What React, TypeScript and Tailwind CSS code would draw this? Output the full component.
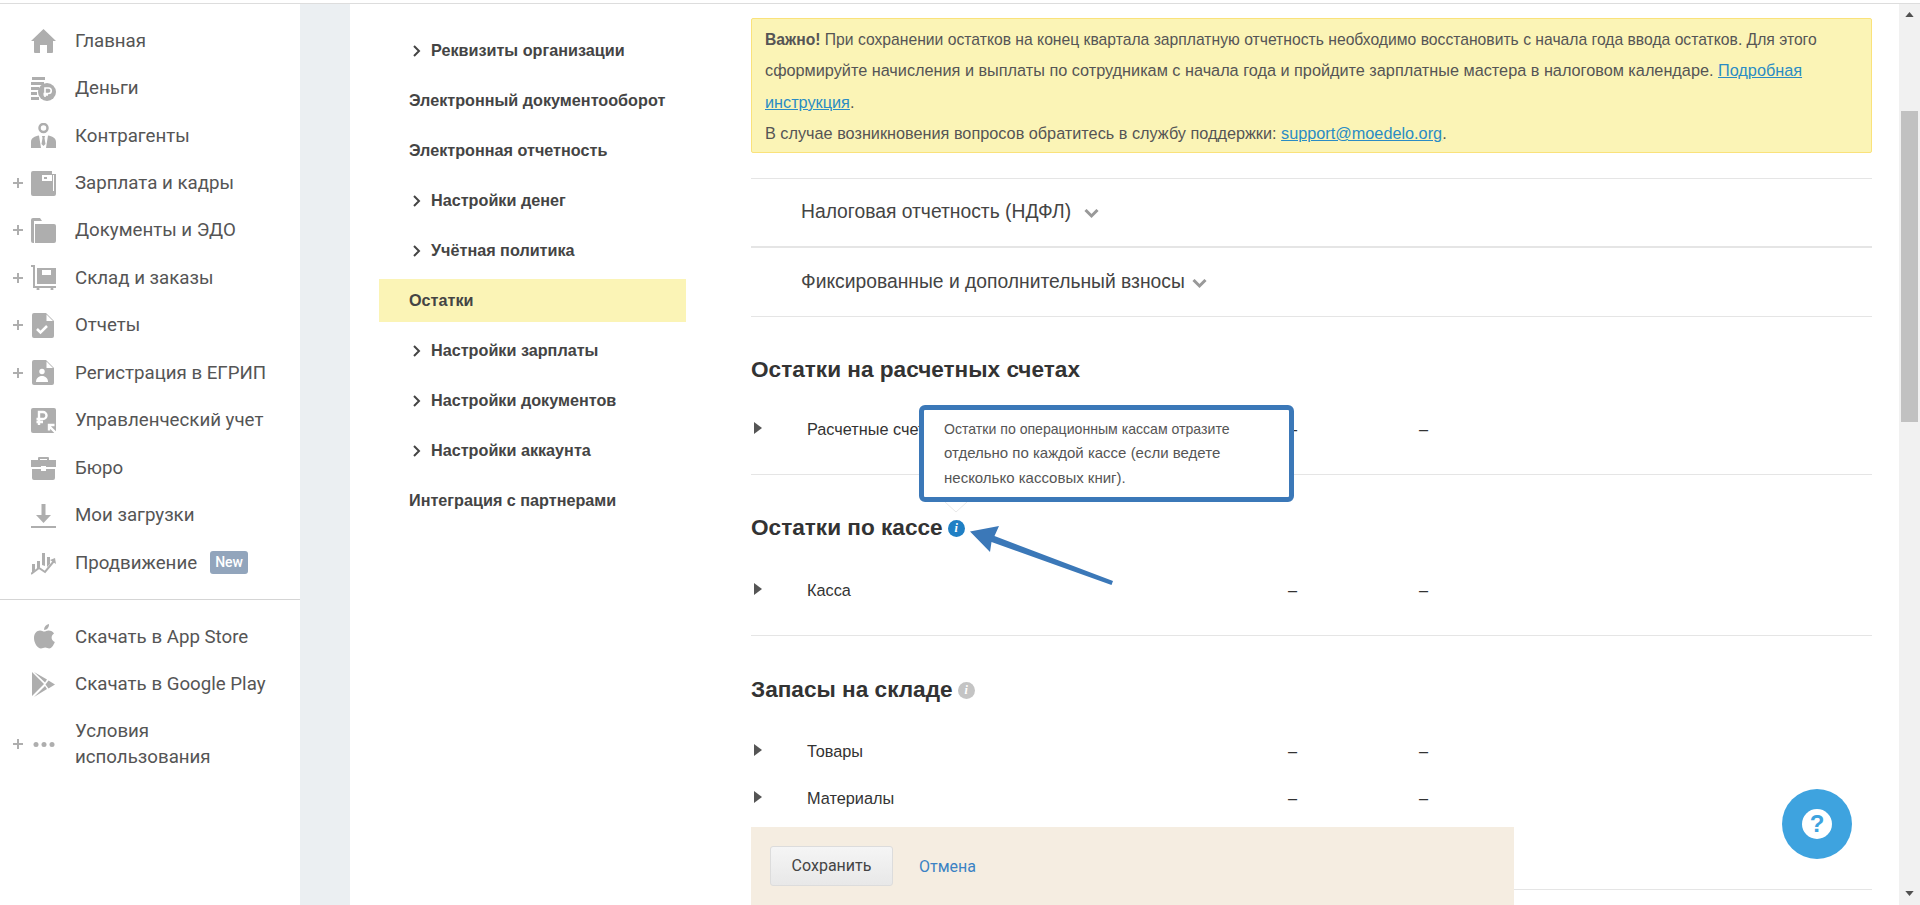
import { ReactNode } from "react";

const ICO = "w-[25px] h-[25px] text-[#aeaeae]";

const Svg = ({ children }: { children: ReactNode }) => (
  <svg viewBox="0 0 25 25" className={ICO} fill="currentColor">{children}</svg>
);

const icons: Record<string, ReactNode> = {
  home: <Svg><path d="M12.500 1 25 13h-3v11a1 1 0 0 1-1 1h-5v-8H9v8H4a1 1 0 0 1-1-1V13H0z" /></Svg>,
  money: (
    <Svg>
      <path d="M1 1h13v3H1zM0 6h13v3H0zM0 11h8v3H0zM0 16h6v3H0zM0 21h8v3H0z" />
      <circle cx="16" cy="16" r="9" />
      <path d="M14 21v-9h3.500a2.700 2.700 0 0 1 0 5.500H12.500M12.500 19H17" fill="none" stroke="#fff" strokeWidth="1.600" />
    </Svg>
  ),
  person: (
    <Svg>
      <circle cx="12.500" cy="5" r="4" fill="none" stroke="currentColor" strokeWidth="2.500" />
      <path d="M0 25v-6c0-4 4-6 8-6.500l2 12.500zM25 25v-6c0-4-4-6-8-6.500L15 25zM11 13h3l-.5 2 1 6-2 2-2-2 1-6z" />
    </Svg>
  ),
  wallet: (
    <Svg>
      <path d="M2 0h19v3h4v20a2 2 0 0 1-2 2H2a2 2 0 0 1-2-2V2a2 2 0 0 1 2-2z" />
      <path d="M11 4h10v6H11z" fill="#fff" />
      <rect x="13" y="6" width="3" height="2" />
      <path d="M22 4h1v16h-1z" fill="#fff" />
    </Svg>
  ),
  folder: (
    <Svg>
      <path d="M0 2a2 2 0 0 1 2-2h7l2 3H3v22H2a2 2 0 0 1-2-2z" />
      <path d="M4 6h19a2 2 0 0 1 2 2v15a2 2 0 0 1-2 2H4z" />
    </Svg>
  ),
  cart: (
    <Svg>
      <path d="M0 0h4v21h21v2H2V2H0z" />
      <path d="M6 3h19v16H6z" />
      <path d="M11 5h9v5h-9z" fill="#fff" />
      <circle cx="7" cy="24" r="1.500" /><circle cx="21" cy="24" r="1.500" />
    </Svg>
  ),
  report: (
    <Svg>
      <path d="M3 0h12l8 8v15a2 2 0 0 1-2 2H3a2 2 0 0 1-2-2V2a2 2 0 0 1 2-2z" />
      <path d="M15.500 1.500V8H22z" fill="#fff" />
      <path d="m6 16 3.500 3.500L16 13" fill="none" stroke="#fff" strokeWidth="2.500" />
    </Svg>
  ),
  reg: (
    <Svg>
      <path d="M3 0h12l8 8v15a2 2 0 0 1-2 2H3a2 2 0 0 1-2-2V2a2 2 0 0 1 2-2z" />
      <path d="M15.500 1.500V8H22z" fill="#fff" />
      <circle cx="11" cy="11.500" r="2.700" fill="#fff" />
      <path d="M5 22c0-3.500 2.500-6 6-6s6 2.500 6 6z" fill="#fff" />
    </Svg>
  ),
  mgmt: (
    <Svg>
      <path d="M2 0h21a2 2 0 0 1 2 2v23H2a2 2 0 0 1-2-2V2a2 2 0 0 1 2-2z" />
      <path d="M8 17V4h4a3.500 3.500 0 0 1 0 7H5.500M5.500 14H12" fill="none" stroke="#fff" strokeWidth="2.400" />
      <path d="M25 25 18 18m0 4.500v-5.500h5.500" fill="none" stroke="#fff" strokeWidth="2.400" />
    </Svg>
  ),
  case: (
    <Svg>
      <path d="M8 2h9a1 1 0 0 1 1 1v2h-2V4H9v1H7V3a1 1 0 0 1 1-1z" />
      <path d="M0 5h25v7H15v-1h-5v1H0zM1 14h9v2h5v-2h9v9a2 2 0 0 1-2 2H3a2 2 0 0 1-2-2z" />
    </Svg>
  ),
  download: <Svg><path d="M10.500 1h4v11H20l-7.500 8L5 12h5.500zM0 23h25v2H0z" /></Svg>,
  promo: (
    <Svg>
      <path d="M1 14h3v6l-3 3zM6 11h3v6l-3 3zM11 3h3v13l-3-1zM16 7h3v7l-3 3z" />
      <path d="m0 24 8-6 6 4 9-11" fill="none" stroke="currentColor" strokeWidth="2" />
      <path d="m25 14-1-6-5 2z" />
    </Svg>
  ),
  apple: (
    <Svg>
      <path d="M17.500 6.500c2.500 0 4.500 1.200 5.500 3-3.500 2-3 7 .8 8.500-1.200 3-3.300 6.500-5.600 6.500-1.500 0-2.300-1-4-1s-2.700 1-4.200 1C6.500 24.500 3 19 3 14c0-4.800 3-7.500 6-7.500 1.800 0 3 1.100 4.200 1.100 1.100 0 2.500-1.100 4.300-1.100z" />
      <path d="M13 6c0-3 2-5.500 5-6 .3 3-2 6-5 6z" />
    </Svg>
  ),
  play: (
    <Svg>
      <path d="M1 0 13 12 1 24zM3 0l13 7.500-2 3zM3 25l13-8-2-3zM17.500 8.500l6.500 4-6.500 4-3-4z" />
    </Svg>
  ),
  dots: <Svg><circle cx="5" cy="12.500" r="2.500" /><circle cx="13" cy="12.500" r="2.500" /><circle cx="21" cy="12.500" r="2.500" /></Svg>,
};

const menuTop = [
  { icon: "home", label: "Главная" },
  { icon: "money", label: "Деньги" },
  { icon: "person", label: "Контрагенты" },
  { icon: "wallet", label: "Зарплата и кадры", plus: true },
  { icon: "folder", label: "Документы и ЭДО", plus: true },
  { icon: "cart", label: "Склад и заказы", plus: true },
  { icon: "report", label: "Отчеты", plus: true },
  { icon: "reg", label: "Регистрация в ЕГРИП", plus: true },
  { icon: "mgmt", label: "Управленческий учет" },
  { icon: "case", label: "Бюро" },
  { icon: "download", label: "Мои загрузки" },
  { icon: "promo", label: "Продвижение", badge: true },
];

const settingsNav = [
  { label: "Реквизиты организации", arrow: true },
  { label: "Электронный документооборот" },
  { label: "Электронная отчетность" },
  { label: "Настройки денег", arrow: true },
  { label: "Учётная политика", arrow: true },
  { label: "Остатки", active: true },
  { label: "Настройки зарплаты", arrow: true },
  { label: "Настройки документов", arrow: true },
  { label: "Настройки аккаунта", arrow: true },
  { label: "Интеграция с партнерами" },
];

const Plus = () => (
  <svg viewBox="0 0 10 10" className="w-[10px] h-[10px]" fill="currentColor"><path d="M4 0h2v4h4v2H6v4H4V6H0V4h4z" /></svg>
);

const Chevron = ({ cls }: { cls: string }) => (
  <svg viewBox="0 0 14 10" className={cls} fill="none" stroke="currentColor" strokeWidth="3"><path d="m1 1 6 6 6-6" /></svg>
);

function MenuItem({ icon, label, plus, badge }: { icon: string; label: string; plus?: boolean; badge?: boolean }) {
  return (
    <div className="flex items-center h-[47.45px]">
      <span className="w-[31px] pl-[13px] text-[#aeaeae]">{plus && <Plus />}</span>
      {icons[icon]}
      <span className="ml-[19px] whitespace-nowrap">{label}</span>
      {badge && (
        <span className="ml-[13px] h-[23px] w-[38px] rounded-[3px] bg-[#92a5bc] text-white text-[14px] font-medium flex items-center justify-center">New</span>
      )}
    </div>
  );
}

function Dash({ label }: { label: string }) {
  return (
    <div className="flex items-center h-[47px] text-[16.300px] text-[#333]">
      <svg viewBox="0 0 8 12" className="w-[8px] h-[12px] ml-[3px] -mt-[4px] text-[#555]" fill="currentColor"><path d="M0 0l8 6-8 6z" /></svg>
      <span className="ml-[45px] w-[481px] whitespace-nowrap">{label}</span>
      <span className="w-[131px]">–</span>
      <span>–</span>
    </div>
  );
}

function Title({ text, info }: { text: string; info?: "blue" | "gray" }) {
  return (
    <div className="flex items-center text-[22.600px] font-bold text-[#333] leading-[24px]">
      {text}
      {info && (
        <span className={"ml-[5px] w-[17px] h-[17px] rounded-full text-white text-[12px] font-['Liberation_Serif',serif] italic font-bold flex items-center justify-center " + (info === "blue" ? "bg-[#1f7fc4]" : "bg-[#c4c4c4]")}>i</span>
      )}
    </div>
  );
}

export default function App() {
  return (
    <div className="relative h-[905px] overflow-hidden bg-white pt-[3px] font-['Liberation_Sans',Arial,sans-serif]">
      <div className="flex h-full border-t border-[#dddddd]">
        <aside className="w-[300px] shrink-0 pt-[13px] text-[18.700px] text-[#555] font-['Roboto',sans-serif]">
          {menuTop.map((m) => <MenuItem key={m.label} {...m} />)}
          <div className="border-t border-[#d5d5d5] mt-[13px] pt-[13px]">
            <MenuItem icon="apple" label="Скачать в App Store" />
            <MenuItem icon="play" label="Скачать в Google Play" />
            <div className="flex items-center h-[72px]">
              <span className="w-[31px] pl-[13px] text-[#aeaeae]"><Plus /></span>
              {icons.dots}
              <span className="ml-[19px] leading-[26px]">Условия<br />использования</span>
            </div>
          </div>
        </aside>

        <div className="w-[50px] shrink-0 bg-[#ebeff2]" />

        <nav className="w-[401px] shrink-0 pl-[29px] pt-[25px] text-[16.200px] font-bold text-[#444]">
          {settingsNav.map((s) => (
            <div key={s.label} className={"flex items-center h-[43px] mb-[7px] w-[307px] pl-[30px] whitespace-nowrap " + (s.active ? "bg-[#fbf4b6]" : "")}>
              {s.arrow && (
                <svg viewBox="0 0 10 12" className="w-[10px] h-[12px] mr-[9px] ml-[3px] text-[#444]" fill="none" stroke="currentColor" strokeWidth="2"><path d="m2 1 5 5-5 5" /></svg>
              )}
              {s.label}
            </div>
          ))}
        </nav>

        <main className="w-[1121px] shrink-0 pt-[14px]">
          <div className="h-[135px] border border-[#fae27b] rounded-[2px] bg-[#fbf4b6] px-[13px] pt-[5px] text-[15.700px] leading-[31.400px] text-[#555]">
            <b>Важно!</b> При сохранении остатков на конец квартала зарплатную отчетность необходимо восстановить с начала года ввода остатков. Для этого{" "}
            <span className="text-[16.260px]">сформируйте начисления и выплаты по сотрудникам с начала года и пройдите зарплатные мастера в налоговом календаре. <a className="text-[#2a8cc4] underline">Подробная инструкция</a>.<br />
            В случае возникновения вопросов обратитесь в службу поддержки: <a className="text-[#2a8cc4] underline">support@moedelo.org</a>.</span>
          </div>

          <div className="mt-[25px] h-[68px] border-t border-[#e5e5e5] pl-[50px] flex items-center text-[19.300px] text-[#444]">
            Налоговая отчетность (НДФЛ)
            <Chevron cls="ml-[13px] mt-[3px] w-[15px] h-[10px] text-[#999]" />
          </div>
          <div className="h-[70px] border-t-2 border-[#e5e5e5] pl-[50px] flex items-center text-[19.300px] text-[#444]">
            Фиксированные и дополнительный взносы
            <Chevron cls="ml-[7px] mt-[3px] w-[15px] h-[10px] text-[#999]" />
          </div>

          <section className="border-t border-[#e5e5e5] pt-[41px] h-[158px]">
            <Title text="Остатки на расчетных счетах" />
            <div className="mt-[24px]"><Dash label="Расчетные счета" /></div>
          </section>
          <section className="border-t border-[#e5e5e5] pt-[41px] h-[161px]">
            <Title text="Остатки по кассе" info="blue" />
            <div className="mt-[27px]"><Dash label="Касса" /></div>
          </section>
          <section className="border-t border-[#e5e5e5] pt-[42px] h-[254px]">
            <Title text="Запасы на складе" info="gray" />
            <div className="mt-[26px]">
              <Dash label="Товары" />
              <Dash label="Материалы" />
            </div>
          </section>
          <div className="border-t border-[#e5e5e5]" />
        </main>

        <div className="w-[27px] shrink-0" />

        <div className="flex-1 bg-[#f1f1f1]">
          <div className="flex flex-col items-center h-full">
            <svg viewBox="0 0 10 6" className="mt-[8px] w-[9px] h-[5px] text-[#505050]" fill="currentColor"><path d="M5 0l5 6H0z" /></svg>
            <div className="mt-[94px] w-[17px] h-[311px] bg-[#c1c1c1]" />
            <div className="flex-1" />
            <svg viewBox="0 0 10 6" className="mb-[9px] w-[9px] h-[5px] text-[#505050]" fill="currentColor"><path d="M5 6l5-6H0z" /></svg>
          </div>
        </div>
      </div>

      <div className="absolute left-[751px] top-[827px] w-[763px] h-[78px] bg-[#f5ede1] pl-[19px] pt-[19px] flex items-start">
        <button className="w-[123px] h-[40px] rounded-[3px] border border-[#dcdcdc] bg-gradient-to-b from-[#f5f5f5] to-[#e8e8e8] text-[16px] text-[#444] font-['Roboto',sans-serif]">Сохранить</button>
        <a className="ml-[26px] mt-[9px] text-[16px] text-[#3b82c4] font-['Roboto',sans-serif]">Отмена</a>
      </div>

      <div className="absolute left-[919px] top-[405px] w-[375px] h-[97px] rounded-[6px] border-[5px] border-[#3b78b8] bg-white pl-[20px] pr-[20px] pt-[8px] text-[14.100px] leading-[23.300px] text-[#555]">
        Остатки по операционным кассам отразите <span className="text-[15px]">отдельно по каждой кассе (если ведете несколько кассовых книг).</span>
      </div>
      <svg className="absolute left-[945px] top-[502px] w-[22px] h-[12px] text-[#e8e8e8]" viewBox="0 0 22 12" fill="#fff" stroke="currentColor"><path d="M0 0l11 10L22 0" /></svg>

      <svg className="absolute left-[965px] top-[520px] w-[150px] h-[70px] text-[#3b78b8]" viewBox="0 0 150 70" fill="currentColor">
        <path d="M5 11.500 34 6 29.500 16 148 61l-1.500 4L26.500 22 25 32z" />
      </svg>

      <div className="absolute left-[1782px] top-[789px] w-[70px] h-[70px] rounded-full bg-[#3ea3df] flex items-center justify-center">
        <div className="w-[30px] h-[30px] rounded-full bg-white text-[#3ea3df] text-[24px] font-bold flex items-center justify-center">?</div>
      </div>
    </div>
  );
}
